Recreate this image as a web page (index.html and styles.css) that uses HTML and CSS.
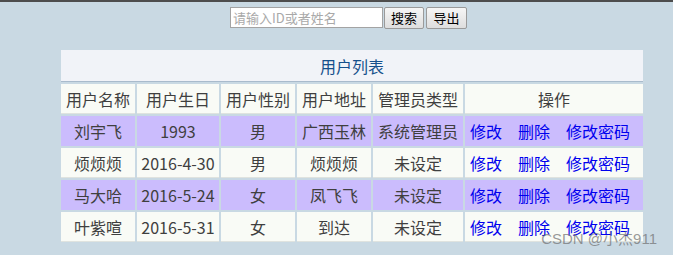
FILE: index.html
```html
<!DOCTYPE html>
<html lang="zh">
<head>
<meta charset="utf-8">
<title>用户列表</title>
<link rel="stylesheet" href="styles.css">
</head>
<body>
<div class="topbar"></div>
<form class="search">
  <input class="search-input" type="text" placeholder="请输入ID或者姓名">
  <button class="btn" type="button">搜索</button>
  <button class="btn" type="button">导出</button>
</form>
<div class="table">
  <div class="caption">用户列表</div>
  <div class="cell head">用户名称</div>
  <div class="cell head">用户生日</div>
  <div class="cell head">用户性别</div>
  <div class="cell head">用户地址</div>
  <div class="cell head">管理员类型</div>
  <div class="cell head">操作</div>

  <div class="cell alt">刘宇飞</div>
  <div class="cell alt">1993</div>
  <div class="cell alt">男</div>
  <div class="cell alt">广西玉林</div>
  <div class="cell alt">系统管理员</div>
  <div class="cell alt ops"><a href="#">修改</a><a href="#">删除</a><a href="#">修改密码</a></div>

  <div class="cell">烦烦烦</div>
  <div class="cell">2016-4-30</div>
  <div class="cell">男</div>
  <div class="cell">烦烦烦</div>
  <div class="cell">未设定</div>
  <div class="cell ops"><a href="#">修改</a><a href="#">删除</a><a href="#">修改密码</a></div>

  <div class="cell alt">马大哈</div>
  <div class="cell alt">2016-5-24</div>
  <div class="cell alt">女</div>
  <div class="cell alt">凤飞飞</div>
  <div class="cell alt">未设定</div>
  <div class="cell alt ops"><a href="#">修改</a><a href="#">删除</a><a href="#">修改密码</a></div>

  <div class="cell">叶紫喧</div>
  <div class="cell">2016-5-31</div>
  <div class="cell">女</div>
  <div class="cell">到达</div>
  <div class="cell">未设定</div>
  <div class="cell ops"><a href="#">修改</a><a href="#">删除</a><a href="#">修改密码</a></div>
</div>
<div class="watermark">CSDN @小杰911</div>
</body>
</html>
```

FILE: styles.css
```css
html, body {
  margin: 0;
  padding: 0;
}
body {
  background: #c9d9e3;
  font-family: "Noto Sans CJK SC", "Liberation Sans", sans-serif;
  width: 673px;
  height: 255px;
  overflow: hidden;
  position: relative;
}
.topbar {
  height: 2px;
  background: #4d4d4d;
}
.search {
  display: flex;
  align-items: flex-start;
  margin: 5px 0 0 230px;
  height: 22px;
}
.search-input {
  box-sizing: border-box;
  width: 153px;
  height: 21px;
  margin: 0;
  padding: 1px 2px;
  border: 1px solid #a3a3a3;
  background: #fff;
  font-family: "Noto Sans CJK SC", sans-serif;
  font-size: 13px;
  line-height: 17px;
  outline: none;
}
.search-input::placeholder {
  color: #a9a9a9;
}
.btn {
  box-sizing: border-box;
  height: 22px;
  width: 40px;
  margin: 0 0 0 1px;
  padding: 0;
  border: 1px solid #9a9a9a;
  border-radius: 2px;
  background: linear-gradient(#f6f6f6, #dedede);
  color: #000;
  font-family: "Noto Sans CJK SC", sans-serif;
  font-size: 13px;
  line-height: 18px;
}
.btn + .btn {
  margin-left: 2px;
  width: 41px;
}
.table {
  margin: 21px 0 0 61px;
  width: 582px;
  display: grid;
  grid-template-columns: 74px 82px 74px 74px 90px 178px;
  column-gap: 2px;
  row-gap: 2px;
}
.caption {
  grid-column: 1 / -1;
  height: 31px;
  border-bottom: 1px solid #a9bbcc;
  background: #f1f3f8;
  color: #16508c;
  font-size: 16px;
  display: flex;
  align-items: center;
  justify-content: center;
}
.cell {
  height: 29px;
  border-bottom: 1px solid #dfe3df;
  background: #f9fbf6;
  color: #3f3f3f;
  font-size: 16px;
  display: flex;
  align-items: center;
  justify-content: center;
  white-space: nowrap;
}
.cell.alt {
  background: #cbbcfd;
  border-bottom-color: #cbbcfd;
}
.cell.ops {
  justify-content: flex-start;
  padding-left: 5px;
  gap: 16px;
}
.ops a {
  color: #0000ee;
  text-decoration: none;
}
.watermark {
  position: absolute;
  right: 16px;
  bottom: 8px;
  font-family: "Liberation Sans", "Noto Sans CJK SC", sans-serif;
  font-size: 15px;
  line-height: 16px;
  color: rgba(110, 110, 110, 0.7);
  pointer-events: none;
}
```
